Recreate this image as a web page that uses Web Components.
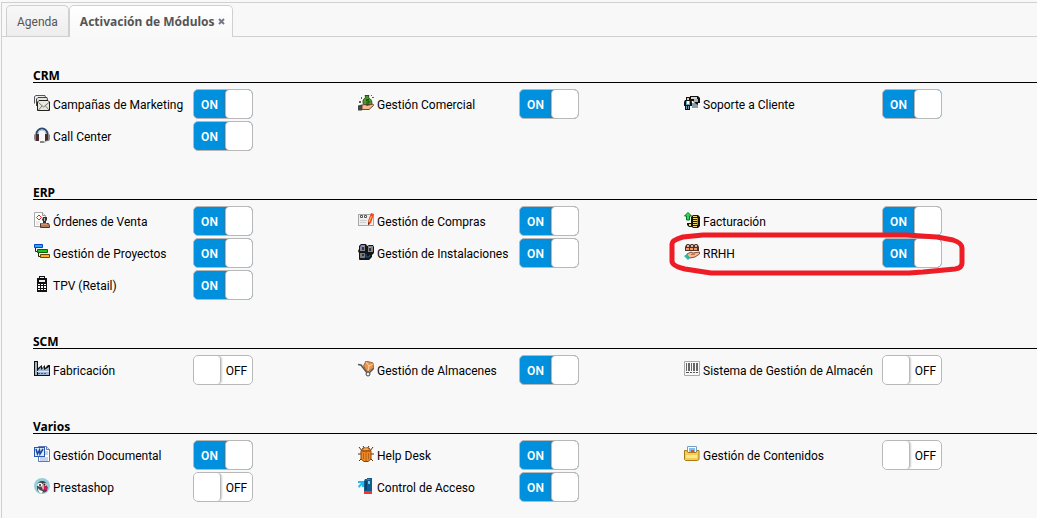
<!DOCTYPE html>
<html lang="es">
<head>
<meta charset="utf-8">
<title>Activación de Módulos</title>
<style>
  body {
    --strong-font: "Noto Sans", "Open Sans", sans-serif;
    margin: 0;
    background: #f8f8f8;
    color: #000;
    font: 12px/16px Roboto, "Liberation Sans", sans-serif;
  }
</style>
</head>
<body>
<module-app>
  <app-tab slot="tabs">Agenda</app-tab>
  <app-tab slot="tabs" active>Activación de Módulos</app-tab>

  <module-section heading="CRM">
    <module-item icon="mail" column="1" on>Campañas de Marketing</module-item>
    <module-item icon="money" column="2" on>Gestión Comercial</module-item>
    <module-item icon="support" column="3" on>Soporte a Cliente</module-item>
    <module-item icon="headset" column="1" on>Call Center</module-item>
  </module-section>

  <module-section heading="ERP">
    <module-item icon="stamp" column="1" on>Órdenes de Venta</module-item>
    <module-item icon="form" column="2" on>Gestión de Compras</module-item>
    <module-item icon="coins" column="3" on>Facturación</module-item>
    <module-item icon="gantt" column="1" on>Gestión de Proyectos</module-item>
    <module-item icon="devices" column="2" on>Gestión de Instalaciones</module-item>
    <module-item icon="people" column="3" on marked>RRHH</module-item>
    <module-item icon="terminal" column="1" on>TPV (Retail)</module-item>
  </module-section>

  <module-section heading="SCM">
    <module-item icon="factory" column="1">Fabricación</module-item>
    <module-item icon="trolley" column="2" on>Gestión de Almacenes</module-item>
    <module-item icon="barcode" column="3">Sistema de Gestión de Almacén</module-item>
  </module-section>

  <module-section heading="Varios">
    <module-item icon="word" column="1" on>Gestión Documental</module-item>
    <module-item icon="bug" column="2" on>Help Desk</module-item>
    <module-item icon="folder" column="3">Gestión de Contenidos</module-item>
    <module-item icon="penguin" column="1">Prestashop</module-item>
    <module-item icon="access" column="2" on>Control de Acceso</module-item>
  </module-section>
</module-app>

<script>
// 16x16 drawings, one per module
const ICONS = {
  mail: `
    <path d="M.5 8.500V1.500L2 .5h9l.5 2" fill="#eee" stroke="#555"/>
    <path d="M2.500 11V4L4 2.500h9l.5 2.500" fill="#e6e6e0" stroke="#444"/>
    <path d="M3.500 7 5 5.500h9L15.500 7v8.500h-12z" fill="#e9e8dc" stroke="#222"/>
    <path d="m4.500 7.500 5 4.500 5.500-4.500M4.500 15l3.500-4M15 15l-3.500-4" fill="none" stroke="#777"/>`,
  headset: `
    <path d="M2.500 9V7a5.500 5.500 0 0 1 11 0v2" fill="none" stroke="#2c4a70" stroke-width="2"/>
    <path d="M4 7a4 4 0 0 1 8 0" fill="none" stroke="#a8bfd8"/>
    <path d="M0 8l1-1h1v7H1l-1-2zM14 7h1l1 1v4l-1 2h-1z" fill="#8a8488"/>
    <path d="M2 7h3v7H2zM11 7h3v7h-3z" fill="#4a2c2c"/>
    <path d="M13.500 13c-1 2-3 2.200-5 2.200" fill="none" stroke="#999"/>
    <path d="M6 14h4v2H6z" fill="#888"/>`,
  money: `
    <path d="M7 .5h4l-.8 2C13 4 14.500 6 13.500 9.500H5.500C4.500 6 5 4 7.800 2.500z" fill="#4f9a2e" stroke="#294a1c"/>
    <path d="M11 4.500H8.500v1.500H11V8H8" fill="none" stroke="#174c0c"/>
    <path d="m4 10 3-.5 2 1 6-1.500.5 1.500L11 14.500H4z" fill="#f2bd91" stroke="#70452e"/>
    <path d="M0 10.500 4 9.500v6H0z" fill="#444"/>
    <path d="M1 6h2v2H1zM3 2h1v2H3zM14 2h2v1h-2zM13 0h1v1h-1z" fill="#556b45"/>`,
  support: `
    <path d="M6 1h8l2 2v5h-2v3h-3V8L9 6H6z" fill="#111"/>
    <path d="M7 2h6v2H7z" fill="#cfd5d9"/><path d="M10 4h4v3h-4z" fill="#a8b6c0"/>
    <path d="M8 8h3l3 2v3H8z" fill="#8a9ca8"/>
    <path d="M2 2h4v3h1l1 2v4H6v4H1v-4H0V7l1-2h1z" fill="#111"/>
    <path d="M3 3h2v2H3z" fill="#f2c79e"/><path d="M2 6h4v4H2z" fill="#4fb2c0"/>
    <path d="M3 6h2v3H3z" fill="#fff"/><path d="M2 11h1v3H2zM4 11h1v3H4z" fill="#7f93aa"/>`,
  stamp: `
    <path d="M.5.5h8l3 3v11H.5z" fill="#fff" stroke="#aaa"/>
    <path d="M8.500.5v3h3" fill="#eee" stroke="#999"/>
    <path d="m5 3 2.500 2.500L5 8 2.500 5.500z" fill="#fff" stroke="#e12c22"/>
    <path d="M2 10h4M2 12h3" stroke="#d8d8d8"/>
    <path d="M9 5h4v3l-1 1v2H9V9L8 8z" fill="#333"/><path d="M10 6h1v3h-1z" fill="#b8b8c0"/>
    <path d="M6.500 11.500h8l1 2v2h-9z" fill="#b77a58" stroke="#55321f"/>
    <path d="M7 12h6" stroke="#e0b898"/>`,
  gantt: `
    <path d="M.5.500h8v3h-8z" fill="#35a2ff" stroke="#0645c0"/>
    <path d="M1.500 4v3.500H4M4.500 9v3.500H7" fill="none" stroke="#222"/>
    <path d="M3.500 5.500h10v3h-10z" fill="#1ec41e" stroke="#075c10"/>
    <path d="M6.500 10.500h9v3h-9z" fill="#ffb31a" stroke="#694300"/>`,
  terminal: `
    <path d="M5 0h6v2h2v14H3V2h2z" fill="#111"/>
    <path d="M6 1h4v1H6zM5 4h6v2H5z" fill="#eee"/>
    <path d="M4 8h2v1H4zM7 8h2v1H7zM10 8h2v1h-2zM4 10h2v2H4zM7 10h2v2H7zM10 10h2v2h-2zM4 13h2v1H4zM7 13h2v1H7zM10 13h2v1h-2z" fill="#fff"/>`,
  form: `
    <path d="M0 2h16v12H0z" fill="#a7a7a7"/><path d="M1 3h14v10H1z" fill="#eee"/>
    <path d="M2.500 3.500h2v2h-2zM6.500 3.500h2v2h-2z" fill="#fff" stroke="#555"/>
    <path d="M2 8h7v1H2zM2 10h6v1H2z" fill="#ccc"/>
    <path d="m13 1 3 1-3 9-3 2v-4z" fill="#ed4a21"/><path d="m13.500 4-2.500 6" stroke="#ffc34a"/>
    <path d="m10 10v3l2-1z" fill="#493329"/>`,
  devices: `
    <path d="M3 0h5l1 2 2-1h4l1 2v6l-2 2v2l-3 3H8l-1 1H2l-1-2V9L0 7l1-2V2z" fill="#151515"/>
    <path d="M3 1h4v6H2V3zM10 2h5v6h-5z" fill="#85878b"/><path d="M2 9h5v5H2z" fill="#777a80"/>
    <path d="M4 3h2v3H4zM11 4h2v3h-2zM4 10h2v2H4z" fill="#30343d"/>
    <path d="M4 2h2v1H4zM11 3h2v1h-2z" fill="#9297ff"/>
    <path d="M8 10v3h3l1-2" fill="none" stroke="#1b5f9b"/>`,
  coins: `
    <path d="M4 .5 7.500 4H5.500v4h-3V4H.5z" fill="#35d64f" stroke="#067622"/>
    <path d="M9 3h5l2 2v9l-2 2H9l-1-1H5l-2-2v-2h4V5z" fill="#1b1708"/>
    <path d="M9 4h4v1H9zM9 6h5v1H9zM9 8h5v1H9zM9 10h5v1H9zM9 12h5v1H9zM9 14h4v1H9zM5 12h2v2H5z" fill="#f4df68"/>
    <path d="M13 6h1v7h-1z" fill="#b48c25"/>`,
  people: `
    <path d="M1 7V3l1-2 1-1h2l1 1 1-1h2l1 1 1-1h2l1 1 1 2v4z" fill="#4d332c"/>
    <path d="M3 1h2v2H3zM7 1h2v2H7zM11 1h2v2h-2z" fill="#d8b8a0"/>
    <path d="M2 4h3v2H2zM6 4h3v2H6zM10 4h3v2h-3z" fill="#f09a68"/>
    <path d="m3 10 4-2 2 1 6.500-1v2l-4.500 3-5 1-3-2z" fill="#f5ba91" stroke="#875136"/>
    <path d="m7 10.500 4-.5" stroke="#a25f3d"/>
    <path d="m0 12 3-2 3 4-2 2z" fill="#2bb7ae"/>`,
  factory: `
    <path d="M0 0h4v7l4-3v3l3-3v3l3-3h2v11H0z" fill="#111"/>
    <path d="M1 2h2v12H1zM4 9l3-3v3l3-3v3l5-3v8H4z" fill="#a1b7cf"/>
    <path d="M3 10h12v1H3z" fill="#dce8f1"/><path d="M4 12h2v1H4zM7 12h2v1H7zM10 12h2v1h-2z" fill="#48617f"/>
    <path d="M1 1h2v1H1z" fill="#9aa7b2"/>`,
  trolley: `
    <path d="m0 3.500 3 .5 7 9 6-6" fill="none" stroke="#555" stroke-width="1.500"/>
    <path d="m8 0 7 2 .5 5-6 4-4-6z" fill="#e69751" stroke="#a2622f"/>
    <path d="m8 1 3 4 4-2M11 5l-1 5" fill="none" stroke="#ffd49f"/>
    <circle cx="10" cy="13" r="2" fill="#eee" stroke="#444"/>`,
  barcode: `
    <path d="M.5.5h15v14H.5z" fill="#f8f8f8" stroke="#aaa"/>
    <path d="M2 2h1v8H2zM4 2h2v8H4zM7 2h1v8H7zM9 2h2v8H9zM12 2h2v8h-2z" fill="#666"/>
    <path d="M2 11h3v1H2zM6 11h2v1H6zM9 11h2v1H9zM12 11h2v1h-2z" fill="#555"/>`,
  word: `
    <path d="M4.500.5h8l3 3v12h-11z" fill="#fff" stroke="#5a79b9"/>
    <path d="M12.500.5v3h3" fill="#dce6ff" stroke="#5a79b9"/>
    <path d="M11 6h3M11 8h3M6 12h8M6 14h8" stroke="#8ba7df"/>
    <path d="M0 1h11v10H0z" fill="#2858ad"/><path d="M1 2h9v8H1z" fill="#dce8ff"/>
    <path d="m2 3 1.500 5 2-4 .5 4 3-5" fill="none" stroke="#174698" stroke-width="1.500"/>`,
  penguin: `
    <circle cx="8" cy="8" r="8" fill="#96cfdc"/>
    <path d="M3 8c0-6 10-7 10 0v5c-2 2-6 2-8 1-2-1-2-3-2-6z" fill="#4a4648"/>
    <path d="M3 7c1-3 5-3 6 0-1 2-5 2-6 0zM9 6c1-2 4-1 4 1-1 1-3 1-4-1zM4 10c1 2 3 3 5 3l-1 2c-3 0-4-2-4-5z" fill="#fff"/>
    <circle cx="6" cy="7" r="1" fill="#222"/><circle cx="10.500" cy="6.500" r="1" fill="#222"/>
    <path d="m7 8 3-1 1 3-2 2z" fill="#e0a3ad"/><path d="m10 8 4 1-1 4-3-2z" fill="#dc1262"/>`,
  bug: `
    <path d="m1 1 3 4M15 1l-3 4M0 8h16M1 15l4-4M15 15l-4-4M5 0l2 3M11 0 9 3" stroke="#543015"/>
    <path d="M5 2h6l2 3v8l-3 2.500H6L3 13V5z" fill="#ef8b22" stroke="#8a410b"/>
    <path d="M4 5h8" stroke="#70330b"/><path d="M5.500 7v6M8 6v9M10.500 7v6" stroke="#b8611a"/>
    <path d="M6 3h4" stroke="#ffd079"/>`,
  access: `
    <path d="M0 3h6v6H4V7L1 10 0 8l3-3H0z" fill="#27b8ed"/>
    <path d="M7 1h2V0h5v13H6V3z" fill="#0d5d91"/><path d="M7 3h2v9H7z" fill="#134166"/>
    <path d="M10 3h2v3h-2z" fill="#68d4f3"/><path d="M9 1h3v1H9z" fill="#2e91c0"/>
    <path d="M6 13h8v3H6z" fill="#ee3434"/>`,
  folder: `
    <path d="M3.500.5h9v9h-9z" fill="#fff" stroke="#799ec6"/>
    <path d="M5 2h6v5H5z" fill="#79c0f2"/><path d="M7 4h3v3H7z" fill="#e7493c"/>
    <path d="M.5 4.500h2l1.500 2h8l1-2h2v9l-2 1H1.500l-1-1z" fill="#f4cd55" stroke="#a87b17"/>
    <path d="M2 9h11v3H2z" fill="#ffe68a"/>`,
};

const attachTemplate = (element, html) => {
  const template = document.createElement("template");
  template.innerHTML = html;
  const root = element.attachShadow({ mode: "open" });
  root.append(template.content.cloneNode(true));
  return root;
};

class ModuleApp extends HTMLElement {
  connectedCallback() {
    attachTemplate(this, `
      <style>
        :host {
          display: block;
          margin: 2px 0 0 1px;
          border: solid #d0d0d0;
          border-width: 1px 0 0 1px;
          min-height: calc(100vh - 3px);
        }

        nav {
          display: flex;
          border-bottom: 1px solid #d0d0d0;
          padding: 2px 4px 0;
        }

        main {
          display: grid;
          gap: 32px;
          padding: 29px 0 14px 31px;
        }
      </style>
      <nav role="tablist"><slot name="tabs"></slot></nav>
      <main><slot></slot></main>
    `);
  }
}

class AppTab extends HTMLElement {
  connectedCallback() {
    const active = this.hasAttribute("active");
    attachTemplate(this, `
      <style>
        :host {
          display: flex;
          align-items: center;
          box-sizing: border-box;
          height: 31px;
          padding: 1px 10px 0;
          border: 1px solid #d0d0d0;
          border-bottom: 0;
          border-radius: 5px 5px 0 0;
          background: linear-gradient(#f8f8f8, #ededed);
        }

        :host([active]) {
          height: 32px;
          margin-bottom: -1px;
          padding: 0 7px 0 10px;
          background: linear-gradient(#fff, #f8f8f8);
          font-family: var(--strong-font);
          font-weight: bold;
        }

        button {
          padding: 0;
          border: 0;
          background: none;
          color: #555;
          font: inherit;
          cursor: pointer;
        }

        .close {
          display: flex;
          margin-left: 3px;
        }
      </style>
      <button role="tab" aria-selected="${active}"><slot></slot></button>
      ${active ? `
        <button class="close" aria-label="Cerrar">
          <svg width="7" height="7" viewBox="0 0 7 7">
            <path d="m1 1 5 5M6 1 1 6" stroke="#74788a" stroke-width="2"/>
          </svg>
        </button>` : ""}
    `);
  }
}

class ModuleSection extends HTMLElement {
  connectedCallback() {
    const root = attachTemplate(this, `
      <style>
        :host {
          display: block;
        }

        h2 {
          margin: 0;
          padding-top: 4px;
          border-bottom: 1px solid #000;
          font: bold 12px/12px var(--strong-font);
        }

        .modules {
          display: grid;
          grid-template-columns: 324fr 326fr 354fr;
          row-gap: 2px;
          padding-top: 6px;
        }
      </style>
      <h2></h2>
      <div class="modules"><slot></slot></div>
    `);
    root.querySelector("h2").textContent = this.getAttribute("heading");
  }
}

class ModuleItem extends HTMLElement {
  connectedCallback() {
    const on = this.hasAttribute("on");
    const root = attachTemplate(this, `
      <style>
        :host {
          --name-width: 160px;
          display: flex;
          align-items: center;
          position: relative;
        }

        :host([column="2"]) {
          --name-width: 162px;
        }

        :host([column="3"]) {
          --name-width: 199px;
        }

        .name {
          display: flex;
          align-items: flex-start;
          gap: 3px;
          box-sizing: border-box;
          width: var(--name-width);
          height: 18px;
          padding-left: 1px;
          line-height: 20px;
          white-space: nowrap;
        }

        .name svg {
          flex: none;
        }

        .switch {
          display: flex;
          align-items: stretch;
          box-sizing: border-box;
          width: 60px;
          height: 30px;
          overflow: hidden;
          border: 1px solid #b8b8b8;
          border-radius: 5px;
          background: #fff;
          cursor: pointer;
        }

        input {
          appearance: none;
          order: 1;
          box-sizing: border-box;
          width: 27px;
          margin: 0;
          border-right: 1px solid #b8b8b8;
          border-radius: 4px;
          background: #fff;
          box-shadow: 1px 0 2px #ccc;
          cursor: pointer;
        }

        .state {
          order: 2;
          flex: 1;
          line-height: 30px;
          text-align: center;
        }

        .switch:has(:checked) {
          background: #0090dd;
        }

        input:checked {
          order: 3;
          border-right: 0;
          border-left: 1px solid #b8b8b8;
          box-shadow: -1px 0 2px #3478a0;
        }

        input:checked + .state {
          color: #fff;
          font-weight: 600;
        }

        .ring {
          position: absolute;
          top: -6px;
          left: -14px;
          pointer-events: none;
        }
      </style>
      <label class="name" for="toggle">
        <svg width="16" height="16" viewBox="0 0 16 16">${ICONS[this.getAttribute("icon")]}</svg>
        <slot></slot>
      </label>
      <label class="switch">
        <input type="checkbox" id="toggle" ${on ? "checked" : ""}>
        <span class="state"></span>
      </label>
      ${this.hasAttribute("marked") ? `
        <svg class="ring" width="296" height="44" viewBox="0 0 296 44">
          <path d="M34 3H237L268 5 284 8Q293 11 293 16V31Q293 36 286 37L254 40 240 41H42L16 37Q3 34 3 29V12Q3 8 14 5Z"
            fill="none" stroke="#ee1c25" stroke-width="5" stroke-linejoin="round"/>
        </svg>` : ""}
    `);
    const input = root.querySelector("input");
    const state = root.querySelector(".state");
    const update = () => {
      state.textContent = input.checked ? "ON" : "OFF";
    };
    input.addEventListener("change", update);
    update();
  }
}

customElements.define("module-app", ModuleApp);
customElements.define("app-tab", AppTab);
customElements.define("module-section", ModuleSection);
customElements.define("module-item", ModuleItem);
</script>
</body>
</html>
